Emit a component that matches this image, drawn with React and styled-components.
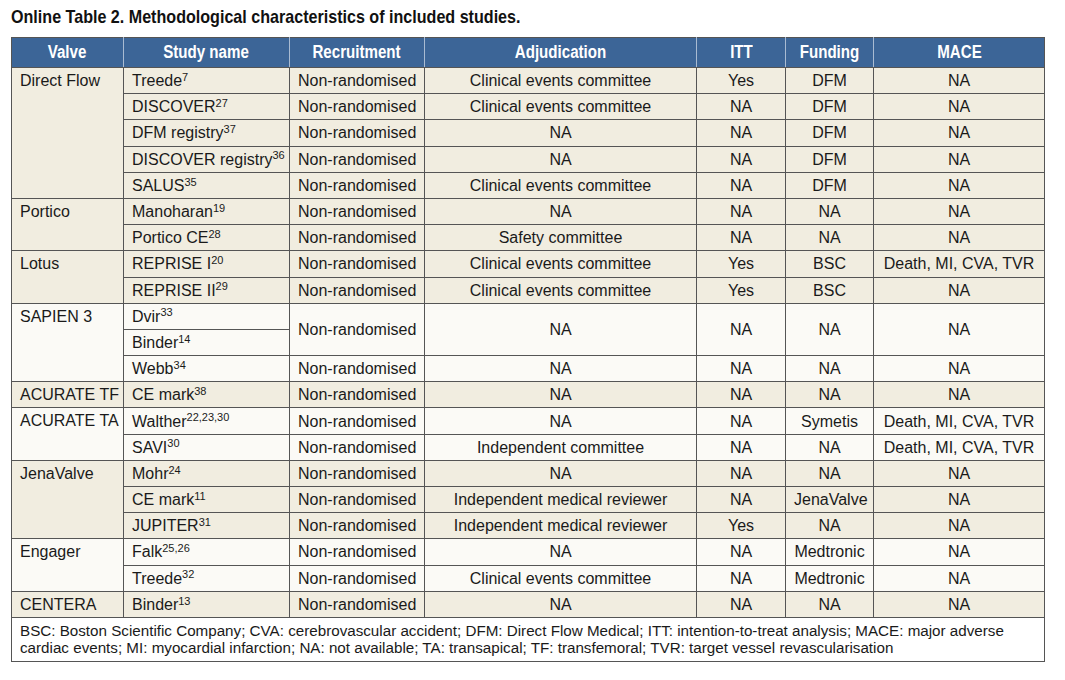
import React from 'react';
import styled, { createGlobalStyle } from 'styled-components';

const GlobalStyle = createGlobalStyle`
  body {
    margin: 0;
    background: #ffffff;
    font-family: "Liberation Sans", Arial, sans-serif;
  }
`;

const Page = styled.div`
  padding: 6px 0 0 11px;
  width: 1065px;
  height: 680px;
  box-sizing: border-box;
`;

const Title = styled.h1`
  margin: 0 0 9px;
  font-family: "Liberation Sans", Arial, sans-serif;
  font-weight: bold;
  font-size: 18.5px;
  line-height: 22px;
  color: #111;
  white-space: nowrap;
`;

// condensed look: the source uses a narrow bold face, squeezed here
const Narrow = styled.span`
  display: inline-block;
  transform: scaleX(${p => p.$k || 0.84});
  transform-origin: ${p => p.$origin || 'center'};
`;

const Table = styled.table`
  width: 1034px;
  table-layout: fixed;
  border-collapse: collapse;
  border: 1px solid #555;
  font-size: 16px;
  color: #1a1a1a;
`;

const HeadCell = styled.th`
  height: 29px;
  padding: 0;
  background: #3c6597;
  color: #fff;
  font-family: "Liberation Sans", Arial, sans-serif;
  font-weight: bold;
  font-size: 18px;
  text-align: center;
  white-space: nowrap;
  border-left: 1px solid #a9bbd2;
  border-bottom: 1px solid #555;
  &:first-child {
    border-left: 1px solid #555;
  }
`;

const Row = styled.tr`
  height: 26.2px;
`;

const Cell = styled.td`
  padding: 0 8px;
  background: ${p => (p.$light ? '#fbfaf6' : '#f1ede0')};
  border: 1px solid #555;
  text-align: ${p => p.$align || 'center'};
  vertical-align: ${p => p.$top ? 'top' : 'middle'};
  padding-top: ${p => p.$top ? '3px' : '0'};
  line-height: 19px;
  white-space: nowrap;
`;

const Sup = styled.sup`
  font-size: 11px;
  line-height: 0;
  position: relative;
  top: 1px;
  vertical-align: super;
`;

const Note = styled.td`
  padding: 4px 8px 5px;
  background: #fff;
  border: 1px solid #555;
  font-size: 15.2px;
  line-height: 17px;
`;

const cols = [112, 166, 135, 272, 89, 88, 171];
const heads = ['Valve', 'Study name', 'Recruitment', 'Adjudication', 'ITT', 'Funding', 'MACE'];

const NR = 'Non-randomised';
const CEC = 'Clinical events committee';
const DMCT = 'Death, MI, CVA, TVR';
const IMR = 'Independent medical reviewer';

// rest: [recruitment, adjudication, itt, funding, mace]; span = rows the rest covers
const groups = [
  {
    valve: 'Direct Flow',
    rows: [
      { name: 'Treede', sup: '7', rest: [NR, CEC, 'Yes', 'DFM', 'NA'] },
      { name: 'DISCOVER', sup: '27', rest: [NR, CEC, 'NA', 'DFM', 'NA'] },
      { name: 'DFM registry', sup: '37', rest: [NR, 'NA', 'NA', 'DFM', 'NA'] },
      { name: 'DISCOVER registry', sup: '36', rest: [NR, 'NA', 'NA', 'DFM', 'NA'] },
      { name: 'SALUS', sup: '35', rest: [NR, CEC, 'NA', 'DFM', 'NA'] },
    ],
  },
  {
    valve: 'Portico',
    rows: [
      { name: 'Manoharan', sup: '19', rest: [NR, 'NA', 'NA', 'NA', 'NA'] },
      { name: 'Portico CE', sup: '28', rest: [NR, 'Safety committee', 'NA', 'NA', 'NA'] },
    ],
  },
  {
    valve: 'Lotus',
    rows: [
      { name: 'REPRISE I', sup: '20', rest: [NR, CEC, 'Yes', 'BSC', DMCT] },
      { name: 'REPRISE II', sup: '29', rest: [NR, CEC, 'Yes', 'BSC', 'NA'] },
    ],
  },
  {
    valve: 'SAPIEN 3',
    light: true,
    rows: [
      { name: 'Dvir', sup: '33', rest: [NR, 'NA', 'NA', 'NA', 'NA'], span: 2 },
      { name: 'Binder', sup: '14', rest: null },
      { name: 'Webb', sup: '34', rest: [NR, 'NA', 'NA', 'NA', 'NA'] },
    ],
  },
  {
    valve: 'ACURATE TF',
    rows: [{ name: 'CE mark', sup: '38', rest: [NR, 'NA', 'NA', 'NA', 'NA'] }],
  },
  {
    valve: 'ACURATE TA',
    light: true,
    rows: [
      { name: 'Walther', sup: '22,23,30', rest: [NR, 'NA', 'NA', 'Symetis', DMCT] },
      { name: 'SAVI', sup: '30', rest: [NR, 'Independent committee', 'NA', 'NA', DMCT] },
    ],
  },
  {
    valve: 'JenaValve',
    rows: [
      { name: 'Mohr', sup: '24', rest: [NR, 'NA', 'NA', 'NA', 'NA'] },
      { name: 'CE mark', sup: '11', rest: [NR, IMR, 'NA', 'JenaValve', 'NA'] },
      { name: 'JUPITER', sup: '31', rest: [NR, IMR, 'Yes', 'NA', 'NA'] },
    ],
  },
  {
    valve: 'Engager',
    light: true,
    rows: [
      { name: 'Falk', sup: '25,26', rest: [NR, 'NA', 'NA', 'Medtronic', 'NA'] },
      { name: 'Treede', sup: '32', rest: [NR, CEC, 'NA', 'Medtronic', 'NA'] },
    ],
  },
  {
    valve: 'CENTERA',
    rows: [{ name: 'Binder', sup: '13', rest: [NR, 'NA', 'NA', 'NA', 'NA'] }],
  },
];

const App = () => (
  <Page>
    <GlobalStyle />
    <Title>
      <Narrow $k={0.87} $origin="left">
        Online Table 2. Methodological characteristics of included studies.
      </Narrow>
    </Title>
    <Table>
      <colgroup>
        {cols.map((w, i) => <col key={i} style={{ width: w }} />)}
      </colgroup>
      <thead>
        <tr>
          {heads.map(h => (
            <HeadCell key={h}>
              <Narrow>{h}</Narrow>
            </HeadCell>
          ))}
        </tr>
      </thead>
      <tbody>
        {groups.map(g =>
          g.rows.map((r, i) => (
            <Row key={g.valve + i}>
              {i === 0 && (
                <Cell $light={g.light} $align="left" $top rowSpan={g.rows.length}>
                  {g.valve}
                </Cell>
              )}
              <Cell $light={g.light} $align="left">
                {r.name}<Sup>{r.sup}</Sup>
              </Cell>
              {r.rest && r.rest.map((v, j) => (
                <Cell key={j} $light={g.light} $align={j === 0 ? 'left' : 'center'} rowSpan={r.span || 1}>
                  {v}
                </Cell>
              ))}
            </Row>
          ))
        )}
        <tr>
          <Note colSpan={7}>
            BSC: Boston Scientific Company; CVA: cerebrovascular accident; DFM: Direct Flow Medical; ITT: intention-to-treat analysis; MACE: major adverse
            <br />
            cardiac events; MI: myocardial infarction; NA: not available; TA: transapical; TF: transfemoral; TVR: target vessel revascularisation
          </Note>
        </tr>
      </tbody>
    </Table>
  </Page>
);

export default App;
